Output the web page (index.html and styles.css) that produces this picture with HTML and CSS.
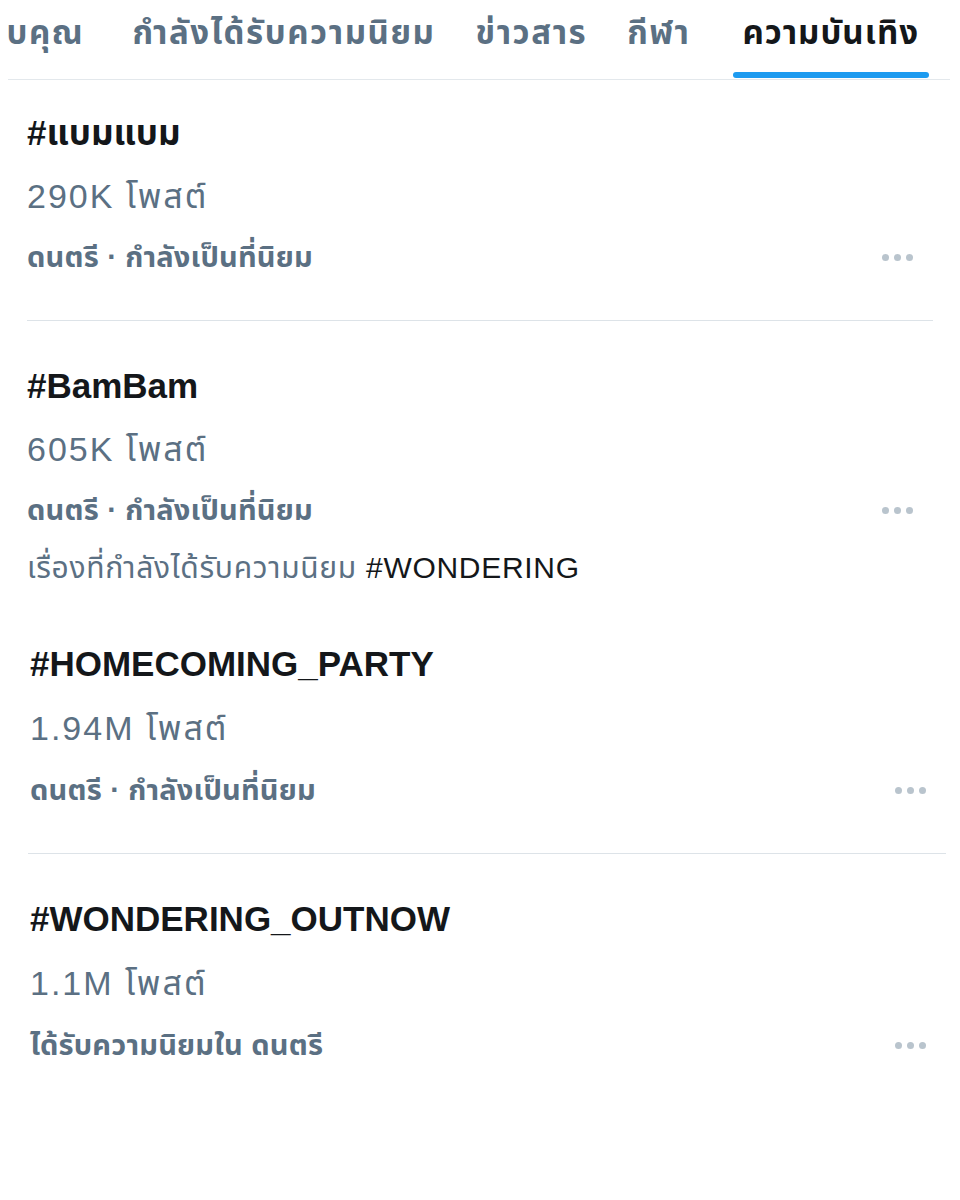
FILE: index.html
```html
<!DOCTYPE html>
<html lang="th">
<head>
<meta charset="utf-8">
<title>แนวโน้ม</title>
<link rel="stylesheet" href="styles.css">
</head>
<body>
<nav class="tabs">
  <div class="tab-track">
    <a class="tab tab--first">สำหรับคุณ</a>
    <a class="tab">กำลังได้รับความนิยม</a>
    <a class="tab">ข่าวสาร</a>
    <a class="tab">กีฬา</a>
    <a class="tab tab--active">ความบันเทิง</a>
  </div>
</nav>
<ul class="trends">
  <li class="trend trend--first">
    <div class="trend-name">#แบมแบม</div>
    <div class="trend-count">290K โพสต์</div>
    <div class="trend-meta"><span>ดนตรี · กำลังเป็นที่นิยม</span><span class="more"><i></i><i></i><i></i></span></div>
  </li>
  <li class="trend trend--related">
    <div class="trend-name">#BamBam</div>
    <div class="trend-count">605K โพสต์</div>
    <div class="trend-meta"><span>ดนตรี · กำลังเป็นที่นิยม</span><span class="more"><i></i><i></i><i></i></span></div>
    <div class="trend-with">เรื่องที่กำลังได้รับความนิยม <span class="tag">#WONDERING</span></div>
  </li>
  <li class="trend trend--shifted">
    <div class="trend-name">#HOMECOMING_PARTY</div>
    <div class="trend-count">1.94M โพสต์</div>
    <div class="trend-meta"><span>ดนตรี · กำลังเป็นที่นิยม</span><span class="more"><i></i><i></i><i></i></span></div>
  </li>
  <li class="trend trend--shifted trend--last">
    <div class="trend-name">#WONDERING_OUTNOW</div>
    <div class="trend-count">1.1M โพสต์</div>
    <div class="trend-meta"><span>ได้รับความนิยมใน ดนตรี</span><span class="more"><i></i><i></i><i></i></span></div>
  </li>
</ul>
</body>
</html>
```
FILE: styles.css
```css
html, body {
  margin: 0;
  padding: 0;
  background: #ffffff;
}
body {
  width: 960px;
  height: 1200px;
  overflow: hidden;
  font-family: "Liberation Sans", "Noto Sans Thai", "Noto Sans Thai Looped", "Loma", "Garuda", "Noto Sans", "DejaVu Sans", sans-serif;
  color: #14171a;
}
.tabs {
  height: 79px;
  margin: 0 10px 0 8px;
  border-bottom: 1px solid #e3e8ec;
  overflow: hidden;
}
.tab-track {
  display: flex;
  justify-content: flex-end;
  gap: 40px;
  padding-right: 31px;
  height: 79px;
}
.tab {
  position: relative;
  display: block;
  flex: none;
  font-size: 33px;
  font-weight: 700;
  letter-spacing: 1.6px;
  line-height: 66px;
  color: #5b7083;
  white-space: nowrap;
}
.tab--first {
  margin-right: 8px;
}
.tab--active {
  color: #14171a;
  letter-spacing: 1px;
  margin-left: 12px;
}
.tab--active::after {
  content: "";
  position: absolute;
  left: -9px;
  right: -10px;
  bottom: 1px;
  height: 6px;
  border-radius: 3px;
  background: #1d9bf0;
}
.trends {
  list-style: none;
  margin: 0;
  padding: 0;
}
.trend {
  margin: 0 27px;
  padding: 33px 0 33px;
  border-bottom: 1px solid #dde3e8;
}
.trend--first {
  padding-top: 21px;
}
.trend--related {
  padding-bottom: 3px;
  border-bottom: none;
}
.trend--shifted {
  margin: 0 14px 0 28px;
  padding-left: 2px;
  padding-bottom: 33px;
}
.trend--shifted .trend-count {
  line-height: 64px;
}
.trend--last {
  border-bottom: none;
}
.trend-name {
  font-size: 35px;
  font-weight: 700;
  line-height: 64px;
  color: #14171a;
}
.trend-count {
  font-size: 34px;
  letter-spacing: 2px;
  line-height: 62px;
  color: #5b7083;
}
.trend-meta {
  display: flex;
  justify-content: space-between;
  align-items: center;
  font-size: 29px;
  font-weight: 700;
  letter-spacing: 0.2px;
  line-height: 60px;
  color: #5b7083;
}
.trend-with {
  font-size: 30px;
  letter-spacing: 0.7px;
  line-height: 56px;
  color: #5b7083;
}
.tag {
  color: #14171a;
}
.more {
  display: flex;
  gap: 5px;
  margin-right: 20px;
}
.more i {
  display: block;
  width: 7px;
  height: 7px;
  border-radius: 50%;
  background: #b9c4cd;
}
```
